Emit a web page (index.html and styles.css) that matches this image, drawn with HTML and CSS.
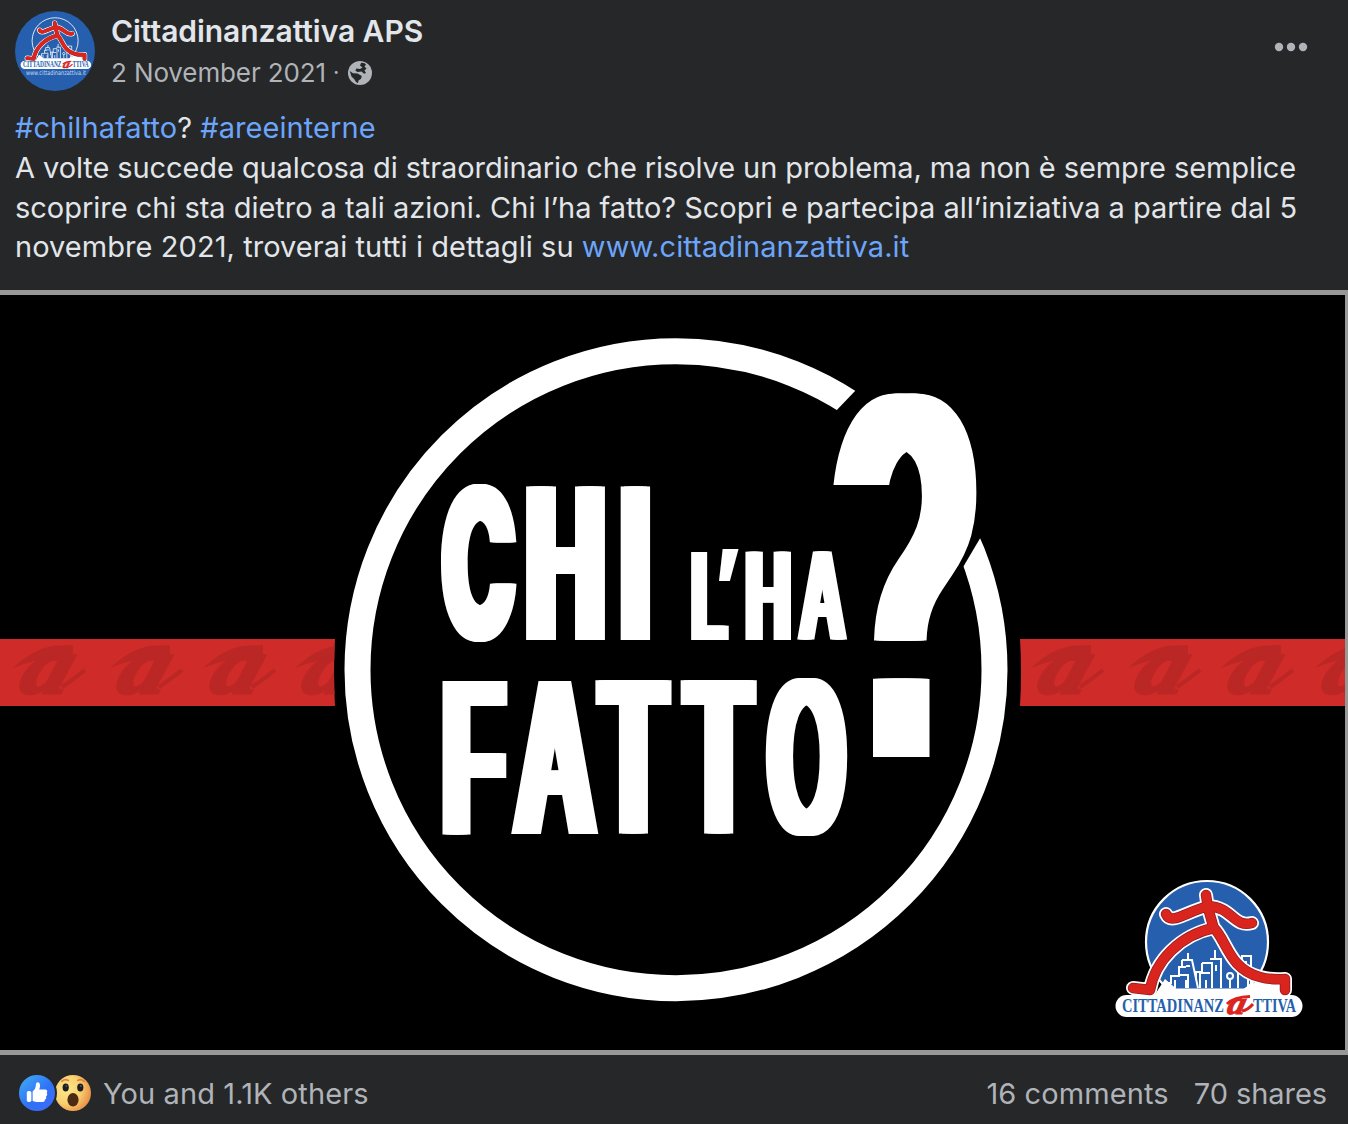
FILE: index.html
```html
<!DOCTYPE html>
<html lang="it">
<head>
<meta charset="utf-8">
<title>Cittadinanzattiva APS</title>
<link rel="stylesheet" href="styles.css">
</head>
<body>
<svg class="defs" aria-hidden="true">
  <defs>
    <clipPath id="disc"><circle cx="97" cy="67" r="61"/></clipPath>
    <path id="figure" d="M96 20 L98 33 L104 54 M56 39 C61 50 74 38 98 31 C122 32 124 53 142 48 M23 113 L40 115 C45 86 70 60 104 53 C117 66 119 94 150 102 Q160 105 175 104 L175 115"/>
    <symbol id="logo" viewBox="0 0 200 145">
      <circle cx="97" cy="67" r="61" class="logo-disc"/>
      <g clip-path="url(#disc)" class="city">
        <path d="M54 108h7v-7h8v-9h7M65 113v-8M72 85h10l6 28M72 85v8M78 78v7M76 91l4 0M70 100h8v13M76 105v8M92 88h10v25M92 88v9h-6v8M105 75v9M100 84h11v29M100 98h-10v15M96 105v8M106 90v6M120 104v9M128 113v-15h10v15M132 98v-17h9v32M136 86v6M144 104v9M142 104h8"/>
        <circle cx="120" cy="101" r="3"/>
      </g>
      <path class="paper" d="M44 121 L55 104 L66 113.500 H134 L147 106 L172 112 V124 H44Z"/>
      <use href="#figure" class="figure-edge"/>
      <rect x="5.500" y="120" width="187" height="22" rx="11" class="paper"/>
      <use href="#figure" class="figure-shade"/>
      <use href="#figure" class="figure-red"/>
      <text x="12" y="136.500" textLength="102" lengthAdjust="spacingAndGlyphs" class="logo-name">CITTADINANZ</text>
      <text x="143" y="136.500" textLength="43" lengthAdjust="spacingAndGlyphs" class="logo-name">TTIVA</text>
      <text transform="translate(116 138.500) skewX(-14) scale(1.1 1)" class="logo-a">a</text>
      <path d="M117 129 Q124 122 140 121.500M132 136Q138 135 143 129" class="logo-swash"/>
    </symbol>
    <g id="mark">
      <text transform="translate(5 52) skewX(-18) scale(1.2 1)" class="mark-a">a</text>
      <path d="M1 27 Q20 9 40 5 L61 4 V17 H44 Q22 18 1 27Z" class="mark-flag"/>
      <path d="M50 46 Q62 38 73 29" class="mark-tail"/>
    </g>
  </defs>
</svg>
<article class="post">
  <header class="head">
    <svg class="avatar" viewBox="0 0 80 80">
      <circle cx="40" cy="40" r="40" fill="#255fae"/>
      <use href="#logo" x="3.500" y="4.500" width="75.500" height="54.700"/>
      <text x="11" y="64" textLength="60" lengthAdjust="spacingAndGlyphs" class="avatar-url">www.cittadinanzattiva.it</text>
    </svg>
    <div class="who">
      <div class="name">Cittadinanzattiva APS</div>
      <div class="meta"><span class="date">2 November 2021</span><span class="dot">·</span>
        <svg class="globe" viewBox="0 0 24 24"><circle cx="12" cy="12" r="12" fill="#b0b3b8"/><path fill="#252728" d="M13 2 C15 1.500 17 2.500 18 3.500 L16.500 5.500 L18.500 7.500 L16.500 9.500 L18 12 L16 12.800 L13.500 10.600 L9.500 11 L7.300 9.500 L8.500 7.500 L12 8 L14.500 6.500 L12 4.500Z M1.700 10 L5 12.200 L9.500 12.500 L13.800 15 L13 17.800 L10.500 19.500 L10 22 C7.500 21.500 7.500 19 5.500 17.500 L3.500 15.500Z"/></svg>
      </div>
    </div>
    <svg class="more" viewBox="0 0 34 10"><circle cx="5" cy="5" r="4.200"/><circle cx="17" cy="5" r="4.200"/><circle cx="29" cy="5" r="4.200"/></svg>
  </header>
  <div class="body">
    <div class="l0"><a>#chilhafatto</a>? <a>#areeinterne</a></div>
    <div class="l1">A volte succede qualcosa di straordinario che risolve un problema, ma non è sempre semplice</div>
    <div class="l2">scoprire chi sta dietro a tali azioni. Chi l’ha fatto? Scopri e partecipa all’iniziativa a partire dal 5</div>
    <div class="l3">novembre 2021, troverai tutti i dettagli su <a>www.cittadinanzattiva.it</a></div>
  </div>
  <div class="photo">
    <svg class="art" viewBox="0 295 1345 755">
      <defs>
        <clipPath id="bars"><path d="M0 639H335Q333 672 335 706H0ZM1020 639H1345V706H1020Q1022 672 1020 639Z"/></clipPath>
      </defs>
      <g clip-path="url(#bars)">
        <rect x="0" y="639" width="1345" height="67" fill="#ce2b29"/>
        <use href="#mark" x="12" y="641"/><use href="#mark" x="109" y="641"/><use href="#mark" x="202" y="641"/><use href="#mark" x="294" y="641"/>
        <use href="#mark" x="1030" y="641"/><use href="#mark" x="1127" y="641"/><use href="#mark" x="1220" y="641"/><use href="#mark" x="1314" y="641"/>
      </g>
      <circle cx="676" cy="669.700" r="318.500" fill="none" stroke="#fff" stroke-width="26"/>
      <path d="M833 414 L880 365 L1050 400 L998 508 L956 579Z"/>
      <g class="title">
        <text class="round" transform="translate(440.500 640.300) scale(1.018 2.113)">C</text>
        <text transform="translate(525.700 640.300) scale(1.102 2.233)">H</text>
        <text transform="translate(620.400 640.300) scale(1.080 2.233)">I</text>
        <text class="small" transform="translate(691 640.300) scale(.586 1.279)">L</text>
        <text class="plain" transform="translate(712 620.200) scale(.85 .98)">’</text>
        <text class="small" transform="translate(745.400 640.300) scale(.634 1.279)">H</text>
        <text class="small" transform="translate(799.700 640.300) scale(.624 1.279)">A</text>
        <text transform="translate(442.300 833.700) scale(1.016 2.233)">F</text>
        <text transform="translate(515.400 833.700) scale(1.090 2.233)">A</text>
        <text transform="translate(601.200 833.700) scale(1.058 2.233)">T</text>
        <text transform="translate(686.400 833.700) scale(1.058 2.233)">T</text>
        <text transform="translate(768.300 833.700) scale(.985 2.233)">O</text>
        <text class="query" transform="translate(831.500 745.300) scale(2.430 5.040)">?</text>
        <rect x="873" y="679" width="56.500" height="78"/>
      </g>
      <rect x="824" y="485" width="66" height="32"/>
      <use href="#logo" x="1110" y="875" width="200" height="145"/>
    </svg>
  </div>
  <footer class="foot">
    <svg class="reacts" viewBox="0 0 74 38">
      <defs>
        <linearGradient id="lk" x1=".1" y1=".1" x2=".8" y2=".9"><stop offset="0" stop-color="#3fa4f6"/><stop offset=".6" stop-color="#2f72f5"/><stop offset="1" stop-color="#3b6df6"/></linearGradient>
        <radialGradient id="wow" cx=".32" cy=".4" r=".72"><stop offset="0" stop-color="#fde68b"/><stop offset=".55" stop-color="#f9d070"/><stop offset="1" stop-color="#e88b45"/></radialGradient>
      </defs>
      <circle cx="55" cy="19" r="18" fill="url(#wow)"/>
      <circle cx="19" cy="19" r="20" fill="#252728"/>
      <circle cx="19" cy="19" r="18" fill="url(#lk)"/>
      <rect x="8.800" y="17" width="4.600" height="11" rx="1.800" fill="#fff"/>
      <path fill="#fff" d="M14.600 17.500C17 15.500 17.800 13.500 17.900 10.500C18 7.400 21.800 7.300 22 11C22.100 13 21.600 14.300 21.200 15.600H27C29.400 15.600 29.800 18 28.600 19C29.700 20 29.300 21.800 28 22.400C28.700 23.600 28 25.200 26.900 25.500C27 27.200 26 28 24.500 28H18.500C16.700 28 15.600 27.500 14.600 26.800Z"/>
      <ellipse cx="47.700" cy="13.500" rx="3.100" ry="4" fill="#1c1d1f"/><ellipse cx="62.300" cy="13.500" rx="3.100" ry="4" fill="#1c1d1f"/>
      <circle cx="48.300" cy="12" r="1" fill="#4b5563"/><circle cx="62.900" cy="12" r="1" fill="#4b5563"/>
      <ellipse cx="55" cy="25.700" rx="5.600" ry="6.800" fill="#4b2a13"/>
      <path d="M43.800 7.300Q47 4.600 50.300 6.400M59.700 6.400Q63 4.600 66.200 7.300" fill="none" stroke="#e0823e" stroke-width="1.700" stroke-linecap="round"/>
    </svg>
    <span class="likes">You and 1.1K others</span>
    <span class="comments">16 comments</span>
    <span class="shares">70 shares</span>
  </footer>
</article>
</body>
</html>
```
FILE: styles.css
```css
body { margin: 0; background: #252728; font-family: Inter, "Liberation Sans", sans-serif; color: #e2e5e9; }
.defs { display: block; width: 0; height: 0; }
.post { width: 1348px; height: 1124px; display: flex; flex-direction: column; overflow: hidden; white-space: nowrap; }

.head { height: 108px; box-sizing: border-box; padding: 11px 40px 0 15px; display: flex; align-items: flex-start; }
.avatar { width: 80px; height: 80px; flex: none; }
.avatar-url { font: 6.500px "DejaVu Sans", sans-serif; fill: #c9daf2; }
.who { margin-left: 16px; flex: 1; }
.name { font-size: 30px; font-weight: 600; line-height: 41px; letter-spacing: -0.050px; }
.meta { display: flex; align-items: center; height: 40px; font-size: 26px; color: #b0b3b8; }
.date { letter-spacing: -0.120px; }
.meta .dot { margin: 0 9px 0 7px; font-size: 22px; }
.globe { width: 24px; height: 24px; margin-top: 1px; }
.more { width: 34px; height: 10px; margin-top: 31px; fill: #b0b3b8; }

.body { height: 182px; font-size: 29px; line-height: 39.800px; }
.body > div { padding-left: 15px; }
.body a { color: #6ca5fa; }
.l0 { letter-spacing: 0.060px; }
.l1 { letter-spacing: -0.090px; }
.l2 { letter-spacing: -0.030px; }
.l3 { letter-spacing: 0.060px; }

.photo { height: 765px; box-sizing: border-box; border: solid #989898; border-width: 5px 3px 5px 0; background: #000; }
.art { display: block; width: 1345px; height: 755px; }
.title { font: bold 100px "Liberation Sans", sans-serif; fill: #fff; }
.title text { text-shadow: -11.300px 0 #fff, -6px 0 #fff, 6px 0 #fff, 11.300px 0 #fff; }
.title .small { text-shadow: -6.500px 0 #fff, -3px 0 #fff, 3px 0 #fff, 6.500px 0 #fff; }
.title .plain { font: 900 100px Inter, sans-serif; text-shadow: none; }
.title .round { font: 900 100px Inter, sans-serif; text-shadow: -5px 0 #fff, -2.500px 0 #fff, 2.500px 0 #fff, 5px 0 #fff; }
.title .query { text-shadow: -17px 0 #fff, -13px 0 #fff, -9px 0 #fff, -5px 0 #fff, 5px 0 #fff, 9px 0 #fff, 13px 0 #fff, 17px 0 #fff; }

.mark-a { font: italic bold 80px "Liberation Serif", serif; fill: #bb2725; stroke: #bb2725; stroke-width: 3px; }
.mark-flag { fill: #bb2725; }
.mark-tail { fill: none; stroke: #bb2725; stroke-width: 4px; }

.logo-disc { fill: #255fae; stroke: #fff; stroke-width: 2.200px; }
.city { fill: none; stroke: #fff; stroke-width: 2px; }
.paper { fill: #fff; }
#figure { fill: none; stroke-linejoin: round; stroke-linecap: round; }
.figure-edge { stroke: #fff; stroke-width: 14px; }
.figure-shade { stroke: #8f1d22; stroke-width: 10.500px; }
.figure-red { stroke: #da251f; stroke-width: 9px; }
.logo-name { font: bold 19px "Liberation Serif", serif; fill: #255fae; }
.logo-a { font: italic bold 32px "Liberation Serif", serif; fill: #da251f; stroke: #da251f; stroke-width: 1px; }
.logo-swash { fill: none; stroke: #da251f; stroke-width: 3px; }

.foot { flex: 1; display: flex; align-items: flex-start; padding: 19px 21px 0 18px; font-size: 29px; line-height: 40px; color: #b0b3b8; }
.reacts { width: 74px; height: 38px; }
.likes { margin-left: 11px; flex: 1; letter-spacing: 0.100px; }
.comments { margin-right: 25px; letter-spacing: 0.100px; }
.shares { letter-spacing: -0.060px; }
```
